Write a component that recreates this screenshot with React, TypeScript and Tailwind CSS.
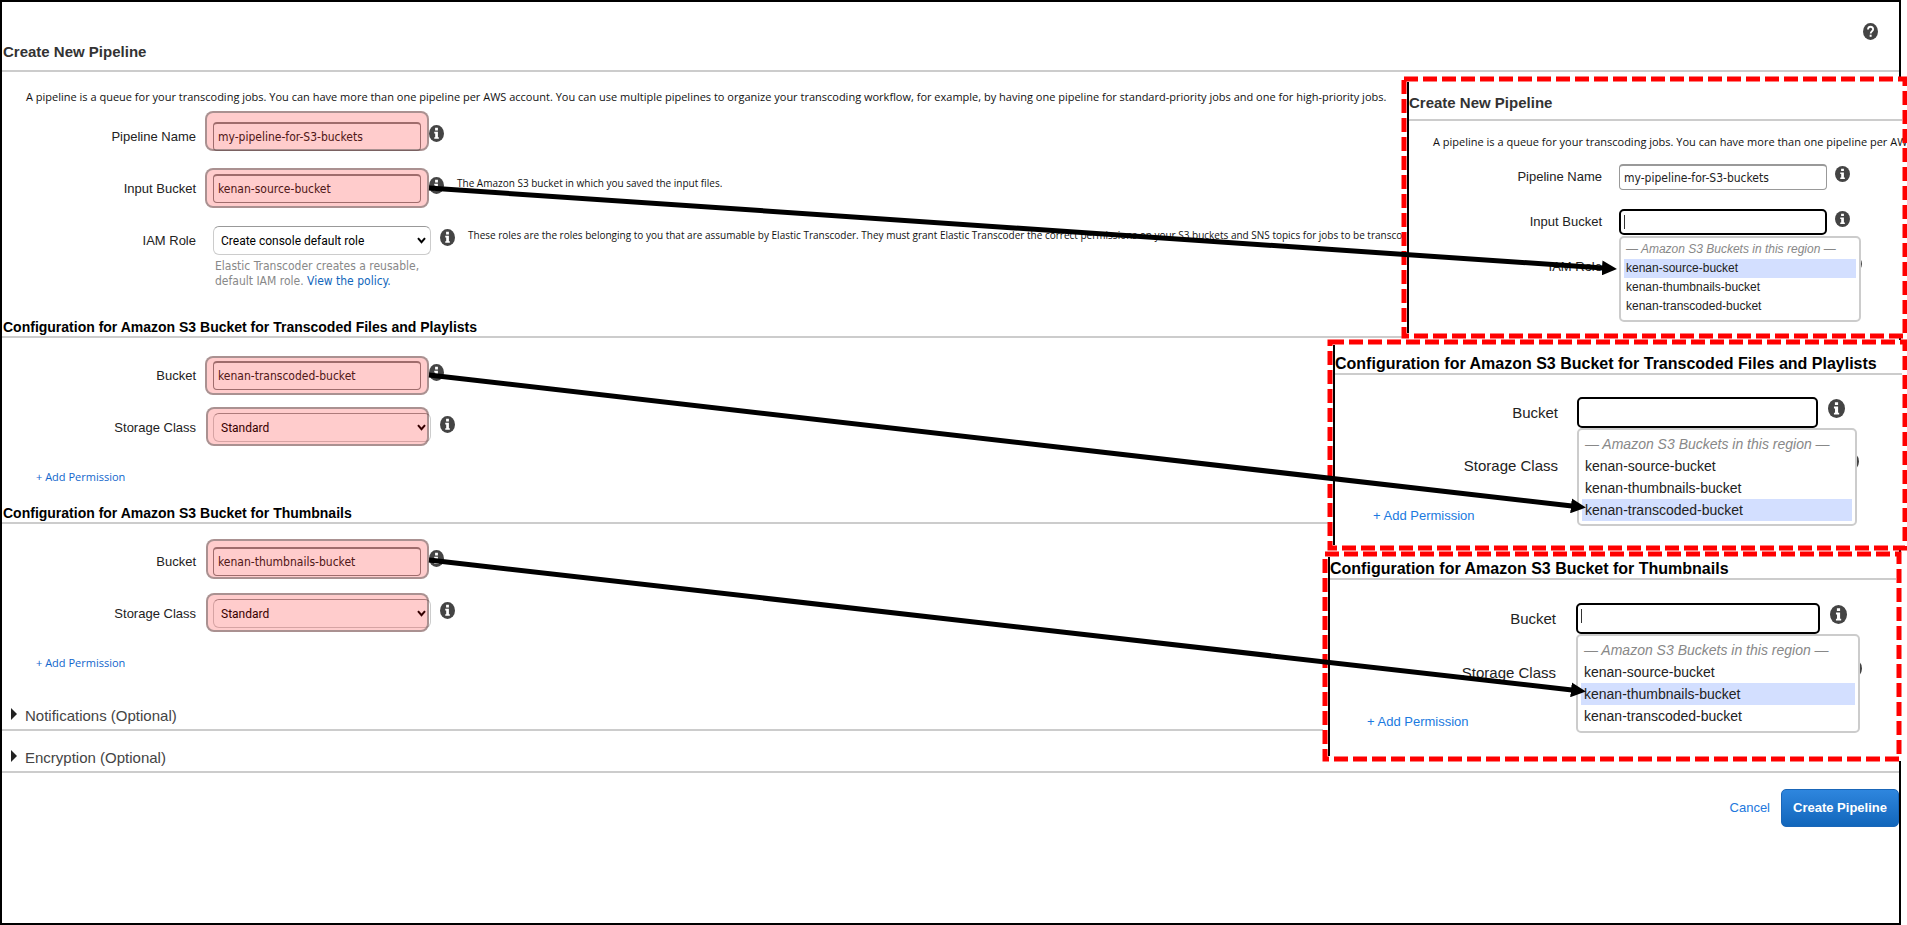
import type { ReactNode } from 'react';

const ARIAL = "font-['Liberation_Sans',Arial,sans-serif]";
const ROBOTO = "font-['Roboto',sans-serif]";
const OPEN = "font-['Open_Sans',sans-serif]";
const TAHOMA = "font-['DejaVu_Sans_Condensed','DejaVu_Sans',sans-serif]";

function InfoIcon({ className = 'h-[17px] w-[15px]' }: { className?: string }) {
  return (
    <svg viewBox="0 0 16 16" preserveAspectRatio="none" className={`shrink-0 ${className}`} aria-hidden="true">
      <ellipse cx="8" cy="8" rx="8" ry="8" fill="#444" />
      <path d="M6.5 2.7h3v2.4h-3zM5.6 6.4h3.9v5.1h1v1.5H5.6v-1.5h1V7.9h-1z" fill="#fff" />
    </svg>
  );
}

function HelpIcon() {
  return (
    <svg viewBox="0 0 16 16" preserveAspectRatio="none" className="h-[17px] w-[15px]" aria-hidden="true">
      <ellipse cx="8" cy="8" rx="8" ry="8" fill="#444" />
      <path
        d="M5.3 6.2C5.3 4.4 6.5 3.5 8 3.5s2.8.9 2.8 2.4c0 1.9-2.6 1.9-2.6 4"
        fill="none"
        stroke="#fff"
        strokeWidth="1.9"
      />
      <path d="M7.1 11h2.1v2H7.1z" fill="#fff" />
    </svg>
  );
}

function Highlight({ className }: { className: string }) {
  return (
    <span
      className={`pointer-events-none absolute rounded-lg border-2 border-[#555]/50 bg-[#ff0000]/20 ${className}`}
    />
  );
}

function Row({
  id,
  label,
  hint,
  highlight,
  gap,
  className = 'h-[52px]',
  children,
}: {
  id: string;
  label: string;
  hint?: string;
  highlight?: string;
  gap: string;
  className?: string;
  children: ReactNode;
}) {
  return (
    <div className={`flex items-start ${className}`}>
      <label htmlFor={id} className="w-[194px] shrink-0 text-right text-[13px] leading-[30px] text-[#222]">
        {label}
      </label>
      <div className={`relative ml-[17px] flex shrink-0 items-start ${gap}`}>
        {children}
        {highlight && <Highlight className={highlight} />}
        <InfoIcon className="mt-[3px] h-[17px] w-[15px]" />
      </div>
      {hint && (
        <p className={`ml-[13px] text-[10px] leading-[18px] whitespace-nowrap text-[#111] ${OPEN}`}>{hint}</p>
      )}
    </div>
  );
}

function TextInput({ id, value }: { id: string; value: string }) {
  return (
    <input
      id={id}
      type="text"
      defaultValue={value}
      className={`h-[29px] w-[208px] rounded border border-t-2 border-[#888] bg-white px-1 text-[12px] text-[#222] ${TAHOMA}`}
    />
  );
}

function SelectBox({ id, value, children }: { id: string; value: string; children?: ReactNode }) {
  return (
    <div className="w-[218px]">
      <div className="relative">
        <select
          id={id}
          defaultValue={value}
          className={`block h-[29px] w-full appearance-none rounded-md border border-[#ccc] border-t-[#999] bg-white pr-6 pl-[7px] text-[12px] text-black ${ROBOTO}`}
        >
          <option>{value}</option>
        </select>
        <svg
          viewBox="0 0 9 7"
          className="pointer-events-none absolute top-[11px] right-[5px] h-[7px] w-[9px]"
          aria-hidden="true"
        >
          <path d="M1 1.2l3.5 4 3.5-4" fill="none" stroke="#000" strokeWidth="2" />
        </svg>
      </div>
      {children}
    </div>
  );
}

function Section({
  id,
  title,
  bucket,
  bucketHighlight,
  className,
}: {
  id: string;
  title: string;
  bucket: string;
  bucketHighlight: string;
  className?: string;
}) {
  return (
    <section className={className}>
      <h2 className="border-b-2 border-[#ccc] pl-px text-[14px] leading-[17px] font-bold text-black">{title}</h2>
      <div className="pt-[23px]">
        <Row id={`${id}-bucket`} label="Bucket" gap="gap-2" highlight={bucketHighlight}>
          <TextInput id={`${id}-bucket`} value={bucket} />
        </Row>
        <Row
          id={`${id}-class`}
          label="Storage Class"
          gap="gap-[9px]"
          highlight="-top-[6px] -left-[7px] h-[39px] w-[223px]"
        >
          <SelectBox id={`${id}-class`} value="Standard" />
        </Row>
        <a href="#" className={`mt-[3px] ml-[34px] block w-fit text-[11px] leading-[18px] text-[#1166cc] ${OPEN}`}>
          + Add Permission
        </a>
      </div>
    </section>
  );
}

function Disclosure({ title, className }: { title: string; className: string }) {
  return (
    <div className={`border-b-2 border-[#ccc] pb-[3px] ${className}`}>
      <button type="button" className="flex items-center gap-2 pl-[9px] text-[15px] leading-5 text-[#444]">
        <svg viewBox="0 0 6 12" className="-mt-1 h-3 w-[6px]" aria-hidden="true">
          <path d="M0 0l6 6-6 6z" fill="#222" />
        </svg>
        {title}
      </button>
    </div>
  );
}

function Inset({ className, children }: { className: string; children: ReactNode }) {
  return (
    <aside className={`absolute isolate bg-white p-[5px] ${className}`}>
      <div className="h-full border-l-2 border-black">{children}</div>
      <div className="pointer-events-none absolute inset-[2px]">
        <svg className="block h-full w-full overflow-visible" aria-hidden="true">
          <rect width="100%" height="100%" fill="none" stroke="#ff0000" strokeWidth="5" strokeDasharray="14 5" />
        </svg>
      </div>
    </aside>
  );
}

function BucketMenu({
  active,
  className,
  itemClass,
}: {
  active: string;
  className: string;
  itemClass: string;
}) {
  return (
    <ul className={`absolute left-0 z-10 rounded-[5px] border-2 border-[#ccc] bg-white px-[3px] ${className}`}>
      <li className={`whitespace-nowrap text-[#888] italic ${itemClass}`}>— Amazon S3 Buckets in this region —</li>
      {['kenan-source-bucket', 'kenan-thumbnails-bucket', 'kenan-transcoded-bucket'].map((name) => (
        <li
          key={name}
          className={`whitespace-nowrap text-[#222] ${itemClass} ${name === active ? 'bg-[#d3dfff]' : ''}`}
        >
          {name}
        </li>
      ))}
    </ul>
  );
}

function FocusedInput({ id, caret, className }: { id: string; caret: boolean; className: string }) {
  return (
    <div className="relative">
      <input id={id} type="text" className={`block rounded-[5px] border-2 border-black bg-white ${className}`} />
      {caret && <span className="absolute top-[6px] left-[5px] h-[14px] w-px bg-[#333]" />}
    </div>
  );
}

function BucketInset({
  id,
  title,
  active,
  caret,
  className,
  titleClass,
  bodyClass,
  rowClass,
  labelClass,
  fieldClass,
  inputClass,
  menuClass,
  hiddenIconClass,
  linkClass,
}: {
  id: string;
  title: string;
  active: string;
  caret: boolean;
  className: string;
  titleClass: string;
  bodyClass: string;
  rowClass: string;
  labelClass: string;
  fieldClass: string;
  inputClass: string;
  menuClass: string;
  hiddenIconClass: string;
  linkClass: string;
}) {
  return (
    <Inset className={className}>
      <h2
        className={`border-b-2 border-[#ccc] text-[16px] leading-[18px] font-bold whitespace-nowrap text-black ${titleClass}`}
      >
        {title}
      </h2>
      <div className={bodyClass}>
        <div className={`flex items-start ${rowClass}`}>
          <label htmlFor={id} className={`shrink-0 text-right text-[15px] leading-[31px] text-[#222] ${labelClass}`}>
            Bucket
          </label>
          <div className={`relative flex items-start gap-[10px] ${fieldClass}`}>
            <FocusedInput id={id} caret={caret} className={inputClass} />
            <InfoIcon className="mt-[2px] h-[19px] w-[17px]" />
            <BucketMenu active={active} className={menuClass} itemClass="px-[3px] text-[14px] leading-[22px]" />
          </div>
        </div>
        <div className={`flex items-start ${rowClass}`}>
          <span className={`shrink-0 text-right text-[15px] leading-[31px] text-[#222] ${labelClass}`}>
            Storage Class
          </span>
          <InfoIcon className={`mt-[2px] h-[19px] w-[17px] ${hiddenIconClass}`} />
        </div>
        <a href="#" className={`block w-fit text-[13px] leading-5 text-[#1a7ae0] ${linkClass}`}>
          + Add Permission
        </a>
      </div>
    </Inset>
  );
}

function Arrow({ id, className }: { id: string; className: string }) {
  return (
    <div className={`pointer-events-none absolute left-[429px] ${className}`}>
      <svg className="block h-full w-full overflow-visible" aria-hidden="true">
        <defs>
          <marker
            id={id}
            markerUnits="userSpaceOnUse"
            markerWidth="15"
            markerHeight="15"
            refX="1"
            refY="7.5"
            orient="auto"
          >
            <path d="M0 0L15 7.5 0 15z" fill="#000" />
          </marker>
        </defs>
        <line x1="0" y1="0" x2="100%" y2="100%" stroke="#000" strokeWidth="5" markerEnd={`url(#${id})`} />
      </svg>
    </div>
  );
}

const INTRO =
  'A pipeline is a queue for your transcoding jobs. You can have more than one pipeline per AWS account. You can use multiple pipelines to organize your transcoding workflow, for example, by having one pipeline for standard-priority jobs and one for high-priority jobs.';

export default function App() {
  return (
    <div className={`relative min-h-screen overflow-hidden bg-white ${ARIAL}`}>
      <main className="mr-[6px] min-h-screen border-2 border-black">
        <header className="flex h-[70px] items-end justify-between border-b-2 border-[#ccc] pb-2 pl-px">
          <h1 className="text-[15px] leading-5 font-bold text-[#333]">Create New Pipeline</h1>
          <button type="button" aria-label="Help" className="mt-[21px] mr-[21px] self-start">
            <HelpIcon />
          </button>
        </header>

        <p className={`mt-[15px] ml-6 text-[11px] leading-5 whitespace-nowrap text-[#111] ${OPEN}`}>{INTRO}</p>

        <div className="pt-[15px]">
          <Row
            id="pipeline-name"
            label="Pipeline Name"
            gap="gap-2"
            highlight="-top-[11px] -left-2 h-10 w-[224px]"
          >
            <TextInput id="pipeline-name" value="my-pipeline-for-S3-buckets" />
          </Row>
          <Row
            id="input-bucket"
            label="Input Bucket"
            gap="gap-2"
            highlight="-top-[6px] -left-2 h-10 w-[224px]"
            hint="The Amazon S3 bucket in which you saved the input files."
          >
            <TextInput id="input-bucket" value="kenan-source-bucket" />
          </Row>
          <Row
            id="iam-role"
            label="IAM Role"
            gap="gap-[9px]"
            className="h-[93px]"
            hint="These roles are the roles belonging to you that are assumable by Elastic Transcoder. They must grant Elastic Transcoder the correct permissions on your S3 buckets and SNS topics for jobs to be transcoded."
          >
            <SelectBox id="iam-role" value="Create console default role">
              <p className={`mt-1 pl-[2px] text-[12px] leading-[15px] whitespace-nowrap text-[#888] ${TAHOMA}`}>
                Elastic Transcoder creates a reusable,
                <br />
                default IAM role.{' '}
                <a href="#" className="text-[#1166bb]">
                  View the policy.
                </a>
              </p>
            </SelectBox>
          </Row>
        </div>

        <Section
          id="transcoded"
          title="Configuration for Amazon S3 Bucket for Transcoded Files and Playlists"
          bucket="kenan-transcoded-bucket"
          bucketHighlight="-top-[5px] -left-2 h-[39px] w-[224px]"
        />
        <Section
          id="thumbnails"
          className="mt-[19px]"
          title="Configuration for Amazon S3 Bucket for Thumbnails"
          bucket="kenan-thumbnails-bucket"
          bucketHighlight="-top-2 -left-[7px] h-10 w-[223px]"
        />

        <Disclosure title="Notifications (Optional)" className="mt-[34px]" />
        <Disclosure title="Encryption (Optional)" className="mt-[17px]" />

        <footer className="mt-4 flex items-center justify-end gap-[11px]">
          <a href="#" className="text-[13px] text-[#2277dd]">
            Cancel
          </a>
          <button
            type="button"
            className="h-[38px] w-[118px] rounded-[5px] border border-[#1a66b8] bg-linear-to-b from-[#2e86de] to-[#1166bb] text-[13px] font-bold whitespace-nowrap text-white"
          >
            Create Pipeline
          </button>
        </footer>
      </main>

      <Inset className="top-[77px] right-0 h-[261px] w-[505px]">
        <h2 className="border-b-2 border-[#ccc] pt-[11px] pb-[6px] text-[15px] leading-5 font-bold text-[#333]">
          Create New Pipeline
        </h2>
        <p className={`mt-[11px] ml-6 text-[11px] leading-5 whitespace-nowrap text-[#111] ${OPEN}`}>{INTRO}</p>
        <div className="pt-3">
          <div className="flex h-[45px] items-start">
            <label
              htmlFor="inset-name"
              className="w-[193px] shrink-0 text-right text-[13px] leading-[26px] text-[#222]"
            >
              Pipeline Name
            </label>
            <div className="ml-[17px] flex items-start gap-2">
              <input
                id="inset-name"
                type="text"
                defaultValue="my-pipeline-for-S3-buckets"
                className={`h-[26px] w-[208px] rounded border border-t-2 border-[#999] bg-white px-1 text-[12px] text-[#222] ${TAHOMA}`}
              />
              <InfoIcon className="mt-[2px] h-4 w-[15px]" />
            </div>
          </div>
          <div className="flex h-[45px] items-start">
            <label
              htmlFor="inset-input"
              className="w-[193px] shrink-0 text-right text-[13px] leading-[26px] text-[#222]"
            >
              Input Bucket
            </label>
            <div className="relative ml-[17px] flex items-start gap-2">
              <FocusedInput id="inset-input" caret className="h-[26px] w-[208px]" />
              <InfoIcon className="mt-[2px] h-4 w-[15px]" />
              <BucketMenu
                active="kenan-source-bucket"
                className="top-[27px] h-[86px] w-[242px] pt-[2px]"
                itemClass="px-[2px] text-[12px] leading-[19px]"
              />
            </div>
          </div>
          <div className="flex h-[45px] items-start">
            <span className="w-[193px] shrink-0 text-right text-[13px] leading-[26px] text-[#222]">IAM Role</span>
            <InfoIcon className="mt-[2px] ml-[245px] h-4 w-[15px]" />
          </div>
        </div>
      </Inset>

      <BucketInset
        id="inset-transcoded"
        title="Configuration for Amazon S3 Bucket for Transcoded Files and Playlists"
        active="kenan-transcoded-bucket"
        caret={false}
        className="top-[340px] right-0 h-[210px] w-[579px]"
        titleClass="pt-[10px]"
        bodyClass="pt-[22px]"
        rowClass="h-[53px]"
        labelClass="w-[223px]"
        fieldClass="ml-[19px]"
        inputClass="h-[31px] w-[241px]"
        menuClass="top-[31px] h-[98px] w-[280px] pt-[3px]"
        hiddenIconClass="ml-[284px]"
        linkClass="mt-[3px] ml-[38px]"
      />

      <BucketInset
        id="inset-thumbnails"
        title="Configuration for Amazon S3 Bucket for Thumbnails"
        active="kenan-thumbnails-bucket"
        caret
        className="top-[552px] right-[6px] h-[209px] w-[578px]"
        titleClass="pt-[3px]"
        bodyClass="pt-[23px]"
        rowClass="h-[54px]"
        labelClass="w-[226px]"
        fieldClass="ml-5"
        inputClass="h-[31px] w-[244px]"
        menuClass="top-[31px] h-[99px] w-[284px] pt-[3px]"
        hiddenIconClass="ml-[289px]"
        linkClass="mt-px ml-[37px]"
      />

      <Arrow id="arrow-input" className="top-[188px] right-[304px] h-20" />
      <Arrow id="arrow-transcoded" className="top-[375px] right-[335px] h-[131px]" />
      <Arrow id="arrow-thumbnails" className="top-[560px] right-[335px] h-[130px]" />
    </div>
  );
}
